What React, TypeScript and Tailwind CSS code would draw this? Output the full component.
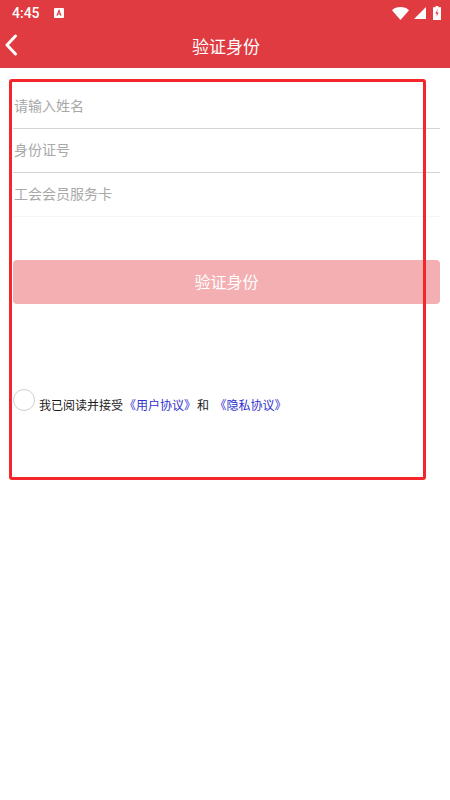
import React from "react";

const cjk = { fontFamily: '"Noto Sans CJK SC", "Liberation Sans", sans-serif' };

function Field({ label, line }: { label: string; line: string }) {
  return (
    <div className={`h-11 flex items-center pl-[1px] pb-[3px] border-b ${line} text-[14px] text-[#a8a8a8]`}>{label}</div>
  );
}

export default function App() {
  return (
    <div className="relative w-[450px] h-[800px] bg-white overflow-hidden" style={cjk}>
      <header className="bg-[#e03b41] h-[68px] flex flex-col text-white">
        <div className="h-[26px] flex items-center pl-3 pr-[9px]">
          <span className="text-[14px] font-medium leading-none mr-[14px]" style={{ fontFamily: "Roboto, sans-serif" }}>4:45</span>
          <svg width="10" height="10" viewBox="0 0 10 10" className="mb-[1px]">
            <rect width="10" height="10" rx="1" fill="#fff" />
            <path d="M3 7.6 5 2.4 7 7.6M3.8 6h2.400" stroke="#e03b41" strokeWidth="1.2" fill="none" />
          </svg>
          <div className="ml-auto flex items-center">
            <svg width="17" height="13" viewBox="0 0 17 13"><path d="M0 3.200C2.200 1.200 5.200 0 8.500 0s6.300 1.200 8.500 3.200L8.500 13z" fill="#fff" /></svg>
            <svg width="12" height="12" viewBox="0 0 12 12" className="ml-[5px]"><path d="M12 0v12H0z" fill="#fff" /></svg>
            <svg width="8" height="14" viewBox="0 0 8 14" className="ml-[7px]">
              <path d="M2.500 0h3v1.300H8V14H0V1.300h2.500z" fill="#fff" />
              <path d="M4.600 3 2.400 7.800h1.500L3.400 11l2.200-4.600H4.100z" fill="#e03b41" />
            </svg>
          </div>
        </div>
        <div className="relative flex-1 flex items-center justify-center pb-[3px]">
          <svg width="14" height="22" viewBox="0 0 14 22" className="absolute left-[4px] top-[8px]">
            <path d="M11.500 2 3 11l8.500 9" stroke="#fff" strokeWidth="3" fill="none" strokeLinecap="round" strokeLinejoin="round" />
          </svg>
          <h1 className="text-[17px] font-normal leading-none pl-[2px]">验证身份</h1>
        </div>
      </header>

      <main className="pl-[13px] pr-[10px] pt-[17px]">
        <Field label="请输入姓名" line="border-[#d4d4d4]" />
        <Field label="身份证号" line="border-[#d4d4d4]" />
        <Field label="工会会员服务卡" line="border-[#f5f5f5]" />
        <button className="mt-[43px] w-full h-[44px] pb-[2px] rounded-[4px] bg-[#f3afb2] text-white text-[16px] flex items-center justify-center">
          验证身份
        </button>
        <div className="mt-[85px] flex items-start">
          <span className="w-[22px] h-[22px] rounded-full border border-[#cfcfcf] shrink-0" />
          <p className="ml-1 mt-[8px] text-[12px] leading-[16px] text-[#1a1a1a] whitespace-pre">
            我已阅读并接受<span className="text-[#2f2fd0] ml-[1px]">《用户协议》</span><span className="ml-[1px]">和 </span><span className="text-[#2f2fd0]"> 《隐私协议》</span>
          </p>
        </div>
      </main>

      <div className="absolute left-[9px] top-[79px] w-[417px] h-[401px] border-[3px] border-[#f2262b] rounded-[3px] pointer-events-none" />
    </div>
  );
}
